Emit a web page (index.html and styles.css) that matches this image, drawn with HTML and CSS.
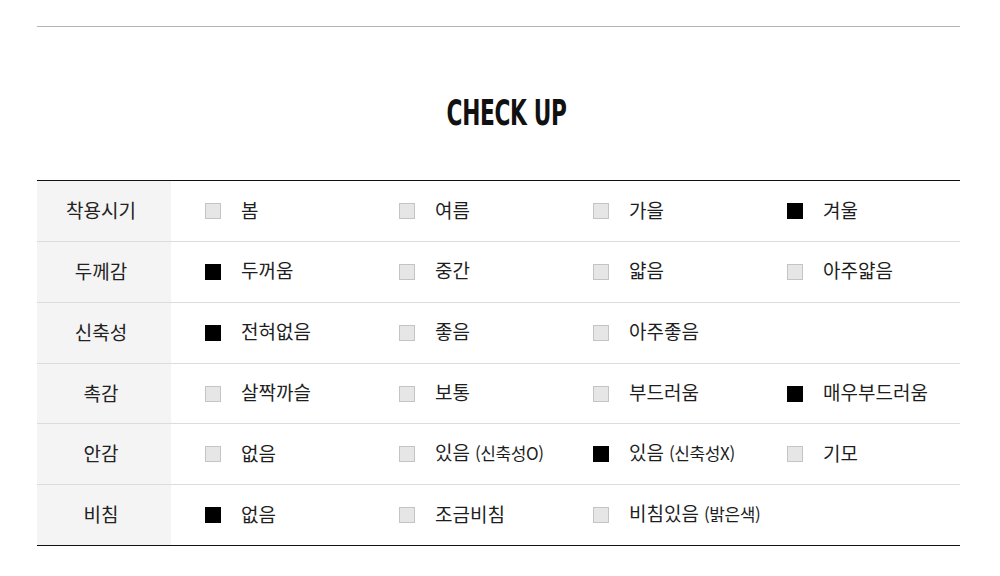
FILE: index.html
```html
<!DOCTYPE html>
<html lang="ko">
<head>
<meta charset="utf-8">
<link rel="stylesheet" href="styles.css">
</head>
<body>
<div class="wrap">
  <hr class="topline">
  <div class="title-wrap"><h2 class="title">CHECK UP</h2></div>
  <div class="table">
    <div class="row">
      <div class="label">착용시기</div>
      <div class="opts">
        <div class="opt"><span class="box"></span><span class="txt">봄</span></div>
        <div class="opt"><span class="box"></span><span class="txt">여름</span></div>
        <div class="opt"><span class="box"></span><span class="txt">가을</span></div>
        <div class="opt"><span class="box on"></span><span class="txt">겨울</span></div>
      </div>
    </div>
    <div class="row">
      <div class="label">두께감</div>
      <div class="opts">
        <div class="opt"><span class="box on"></span><span class="txt">두꺼움</span></div>
        <div class="opt"><span class="box"></span><span class="txt">중간</span></div>
        <div class="opt"><span class="box"></span><span class="txt">얇음</span></div>
        <div class="opt"><span class="box"></span><span class="txt">아주얇음</span></div>
      </div>
    </div>
    <div class="row">
      <div class="label">신축성</div>
      <div class="opts">
        <div class="opt"><span class="box on"></span><span class="txt">전혀없음</span></div>
        <div class="opt"><span class="box"></span><span class="txt">좋음</span></div>
        <div class="opt"><span class="box"></span><span class="txt">아주좋음</span></div>
      </div>
    </div>
    <div class="row">
      <div class="label">촉감</div>
      <div class="opts">
        <div class="opt"><span class="box"></span><span class="txt">살짝까슬</span></div>
        <div class="opt"><span class="box"></span><span class="txt">보통</span></div>
        <div class="opt"><span class="box"></span><span class="txt">부드러움</span></div>
        <div class="opt"><span class="box on"></span><span class="txt">매우부드러움</span></div>
      </div>
    </div>
    <div class="row">
      <div class="label">안감</div>
      <div class="opts">
        <div class="opt"><span class="box"></span><span class="txt">없음</span></div>
        <div class="opt"><span class="box"></span><span class="txt">있음<small>(신축성O)</small></span></div>
        <div class="opt"><span class="box on"></span><span class="txt">있음<small>(신축성X)</small></span></div>
        <div class="opt"><span class="box"></span><span class="txt">기모</span></div>
      </div>
    </div>
    <div class="row">
      <div class="label">비침</div>
      <div class="opts">
        <div class="opt"><span class="box on"></span><span class="txt">없음</span></div>
        <div class="opt"><span class="box"></span><span class="txt">조금비침</span></div>
        <div class="opt"><span class="box"></span><span class="txt">비침있음<small>(밝은색)</small></span></div>
      </div>
    </div>
  </div>
</div>
</body>
</html>
```

FILE: styles.css
```css
* { box-sizing: border-box; }
html, body { margin: 0; padding: 0; background: #fff; }
body {
  font-family: "Noto Sans CJK KR", "Noto Sans", sans-serif;
  color: #222;
}
.wrap {
  width: 923px;
  margin-left: 37px;
  padding-top: 26px;
}
.topline {
  margin: 0;
  border: 0;
  height: 1px;
  background: #b4b4b4;
}
.title-wrap {
  height: 153px;
  padding-top: 66px;
  padding-left: 16px;
  display: flex;
  justify-content: center;
  align-items: flex-start;
}
.title {
  margin: 0;
  font-family: "DejaVu Sans", sans-serif;
  font-stretch: condensed;
  font-weight: 700;
  font-size: 36px;
  line-height: 40px;
  letter-spacing: -0.5px;
  color: #111;
  transform: scaleX(0.67);
}
.table {
  border-top: 1px solid #111;
  border-bottom: 1px solid #111;
}
.row {
  display: flex;
  height: 60.83px;
  border-top: 1px solid #dcdcdc;
}
.row:first-child { border-top: 0; height: 60px; }
.label {
  width: 134px;
  flex: none;
  background: #f4f4f4;
  display: flex;
  align-items: center;
  justify-content: center;
  padding-right: 6px;
  padding-bottom: 3px;
  font-size: 19px;
  color: #222;
}
.opts {
  display: flex;
  align-items: center;
  padding-left: 34px;
  min-width: 0;
}
.opt {
  width: 194px;
  flex: none;
  display: flex;
  align-items: center;
}
.box {
  width: 16px;
  height: 16px;
  background: #e6e6e6;
  border: 1px solid #c4c4c4;
  margin-right: 20px;
  flex: none;
}
.box.on {
  background: #000;
  border-color: #000;
}
.txt {
  font-size: 19px;
  line-height: 24px;
  padding-bottom: 3px;
  color: #1e1e1e;
  white-space: nowrap;
}
.txt small {
  font-size: 17px;
  letter-spacing: -0.4px;
  margin-left: 5px;
}
```
